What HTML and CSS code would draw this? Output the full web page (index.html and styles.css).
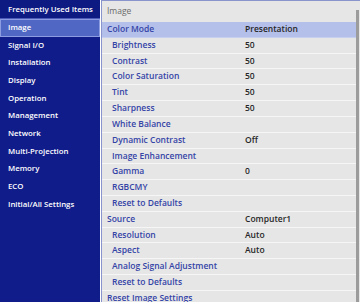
FILE: index.html
```html
<!DOCTYPE html>
<html lang="en">
<head>
  <meta charset="UTF-8">
  <title>Image Menu</title>
  <link rel="stylesheet" href="styles.css">
</head>
<body>
  <div class="screen">
    <!-- Left menu -->
    <div class="sidebar">
      <div class="side-head">Frequently Used Items</div>
      <div class="side-item active">Image</div>
      <div class="side-item">Signal I/O</div>
      <div class="side-item">Installation</div>
      <div class="side-item">Display</div>
      <div class="side-item">Operation</div>
      <div class="side-item">Management</div>
      <div class="side-item">Network</div>
      <div class="side-item">Multi-Projection</div>
      <div class="side-item">Memory</div>
      <div class="side-item">ECO</div>
      <div class="side-item">Initial/All Settings</div>
    </div>

    <!-- Settings list -->
    <div class="panel">
      <div class="panel-head">Image</div>
      <div class="row selected"><span class="label">Color Mode</span><span class="value">Presentation</span></div>
      <div class="row sub"><span class="label">Brightness</span><span class="value">50</span></div>
      <div class="row sub"><span class="label">Contrast</span><span class="value">50</span></div>
      <div class="row sub"><span class="label">Color Saturation</span><span class="value">50</span></div>
      <div class="row sub"><span class="label">Tint</span><span class="value">50</span></div>
      <div class="row sub"><span class="label">Sharpness</span><span class="value">50</span></div>
      <div class="row sub"><span class="label">White Balance</span><span class="value"></span></div>
      <div class="row sub"><span class="label">Dynamic Contrast</span><span class="value">Off</span></div>
      <div class="row sub"><span class="label">Image Enhancement</span><span class="value"></span></div>
      <div class="row sub"><span class="label">Gamma</span><span class="value">0</span></div>
      <div class="row sub"><span class="label">RGBCMY</span><span class="value"></span></div>
      <div class="row sub"><span class="label">Reset to Defaults</span><span class="value"></span></div>
      <div class="row"><span class="label">Source</span><span class="value">Computer1</span></div>
      <div class="row sub"><span class="label">Resolution</span><span class="value">Auto</span></div>
      <div class="row sub"><span class="label">Aspect</span><span class="value">Auto</span></div>
      <div class="row sub"><span class="label">Analog Signal Adjustment</span><span class="value"></span></div>
      <div class="row sub"><span class="label">Reset to Defaults</span><span class="value"></span></div>
      <div class="row"><span class="label">Reset Image Settings</span><span class="value"></span></div>
      <div class="scrollbar"></div>
    </div>
  </div>
</body>
</html>
```

FILE: styles.css
```css
body {
  margin: 0;
  background-color: #ffffff;
  font-family: "Open Sans", "Noto Sans", sans-serif;
  font-size: 8.5px;
}
.screen {
  display: flex;
  height: 302px;
  overflow: hidden;
}
.sidebar {
  width: 100px;
  flex-shrink: 0;
  background-color: #101c8a;
  color: #ffffff;
  font-size: 7.8px;
  font-weight: 600;
  white-space: nowrap;
}
.side-head {
  height: 19px;
  line-height: 19px;
  padding-left: 8px;
  background-color: #0d1a82;
  border-bottom: 1px solid #4c5cb8;
  box-sizing: border-box;
}
.side-item {
  height: 17.67px;
  line-height: 17.67px;
  padding-left: 8px;
}
.side-item.active {
  background-color: #5068c4;
  border: 1px solid #8d9ce0;
  line-height: 15.67px;
  padding-left: 7px;
  box-sizing: border-box;
}
.panel {
  position: relative;
  flex: 1;
  margin-left: 1px;
  background-color: #e6e6e6;
  border-left: 1px solid #8a94cc;
  border-top: 1px solid #8a94cc;
  white-space: nowrap;
}
.panel-head {
  height: 21px;
  line-height: 20px;
  padding-left: 5px;
  color: #6a6a6a;
}
.row {
  display: flex;
  height: 15.82px;
  line-height: 14.82px;
  box-sizing: border-box;
  border-bottom: 1px solid #f6f6f6;
  padding-left: 5px;
  margin-right: 4px;
}
.row.sub {
  padding-left: 10px;
}
.row.selected {
  background-color: #b5c0ea;
  border-bottom-color: #c8d0f0;
}
.row.sub .label {
  width: 133px;
}
.label {
  width: 138px;
  color: #3444a6;
  font-weight: 600;
}
.value {
  color: #262626;
  font-weight: 600;
}
.scrollbar {
  position: absolute;
  right: 1px;
  top: 9px;
  bottom: 0;
  width: 3px;
  background-color: #9c9c9c;
}
```
